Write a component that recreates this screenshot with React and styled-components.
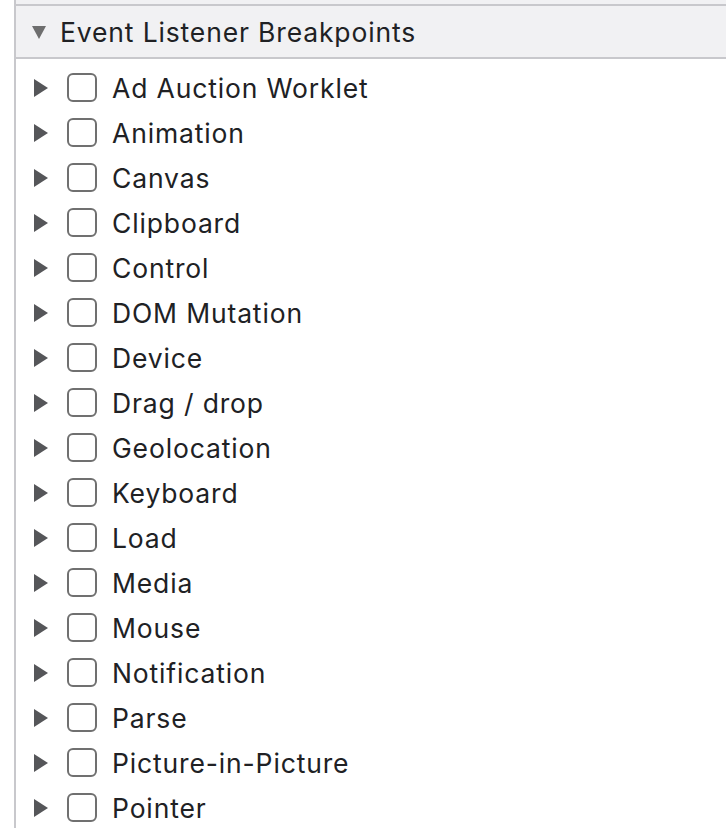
import React from "react";
import styled, { createGlobalStyle } from "styled-components";

const Global = createGlobalStyle`
  html, body { margin: 0; padding: 0; background: #ffffff; }
  body { font-family: Inter, "Liberation Sans", Arial, sans-serif; }
`;

const Pane = styled.div`
  margin-left: 14px;
  border-left: 2px solid #c8c8cc;
  min-height: 828px;
  background: #ffffff;
`;

const TopStrip = styled.div`
  height: 4px;
  background: #f1f1f3;
  border-bottom: 2px solid #c8c8cc;
`;

const Header = styled.div`
  height: 51px;
  display: flex;
  align-items: center;
  background: #f1f1f3;
  border-bottom: 2px solid #c8c8cc;
  padding-left: 16px;
  gap: 14px;
  font-size: 26.5px;
  color: #202124;
  letter-spacing: 0.85px;
`;

const DownTri = styled.span`
  width: 0;
  height: 0;
  border-left: 7px solid transparent;
  border-right: 7px solid transparent;
  border-top: 13px solid #6e6e6e;
  margin-top: 2px;
`;

const List = styled.div`
  padding-top: 6px;
  display: flex;
  flex-direction: column;
`;

const Row = styled.div`
  height: 45px;
  display: flex;
  align-items: center;
  padding-left: 18px;
  font-size: 26.5px;
  color: #202124;
  letter-spacing: 0.85px;
`;

const RightTri = styled.span`
  width: 0;
  height: 0;
  border-top: 9px solid transparent;
  border-bottom: 9px solid transparent;
  border-left: 14px solid #555659;
  margin-right: 19px;
`;

const Box = styled.span`
  box-sizing: border-box;
  width: 30px;
  height: 29px;
  border: 2px solid #707070;
  border-radius: 6px;
  background: #ffffff;
  margin-right: 15px;
`;

const items = [
  "Ad Auction Worklet",
  "Animation",
  "Canvas",
  "Clipboard",
  "Control",
  "DOM Mutation",
  "Device",
  "Drag / drop",
  "Geolocation",
  "Keyboard",
  "Load",
  "Media",
  "Mouse",
  "Notification",
  "Parse",
  "Picture-in-Picture",
  "Pointer",
];

export default function App() {
  return (
    <>
      <Global />
      <Pane>
        <TopStrip />
        <Header>
          <DownTri />
          <span>Event Listener Breakpoints</span>
        </Header>
        <List>
          {items.map((t) => (
            <Row key={t}>
              <RightTri />
              <Box />
              <span>{t}</span>
            </Row>
          ))}
        </List>
      </Pane>
    </>
  );
}
